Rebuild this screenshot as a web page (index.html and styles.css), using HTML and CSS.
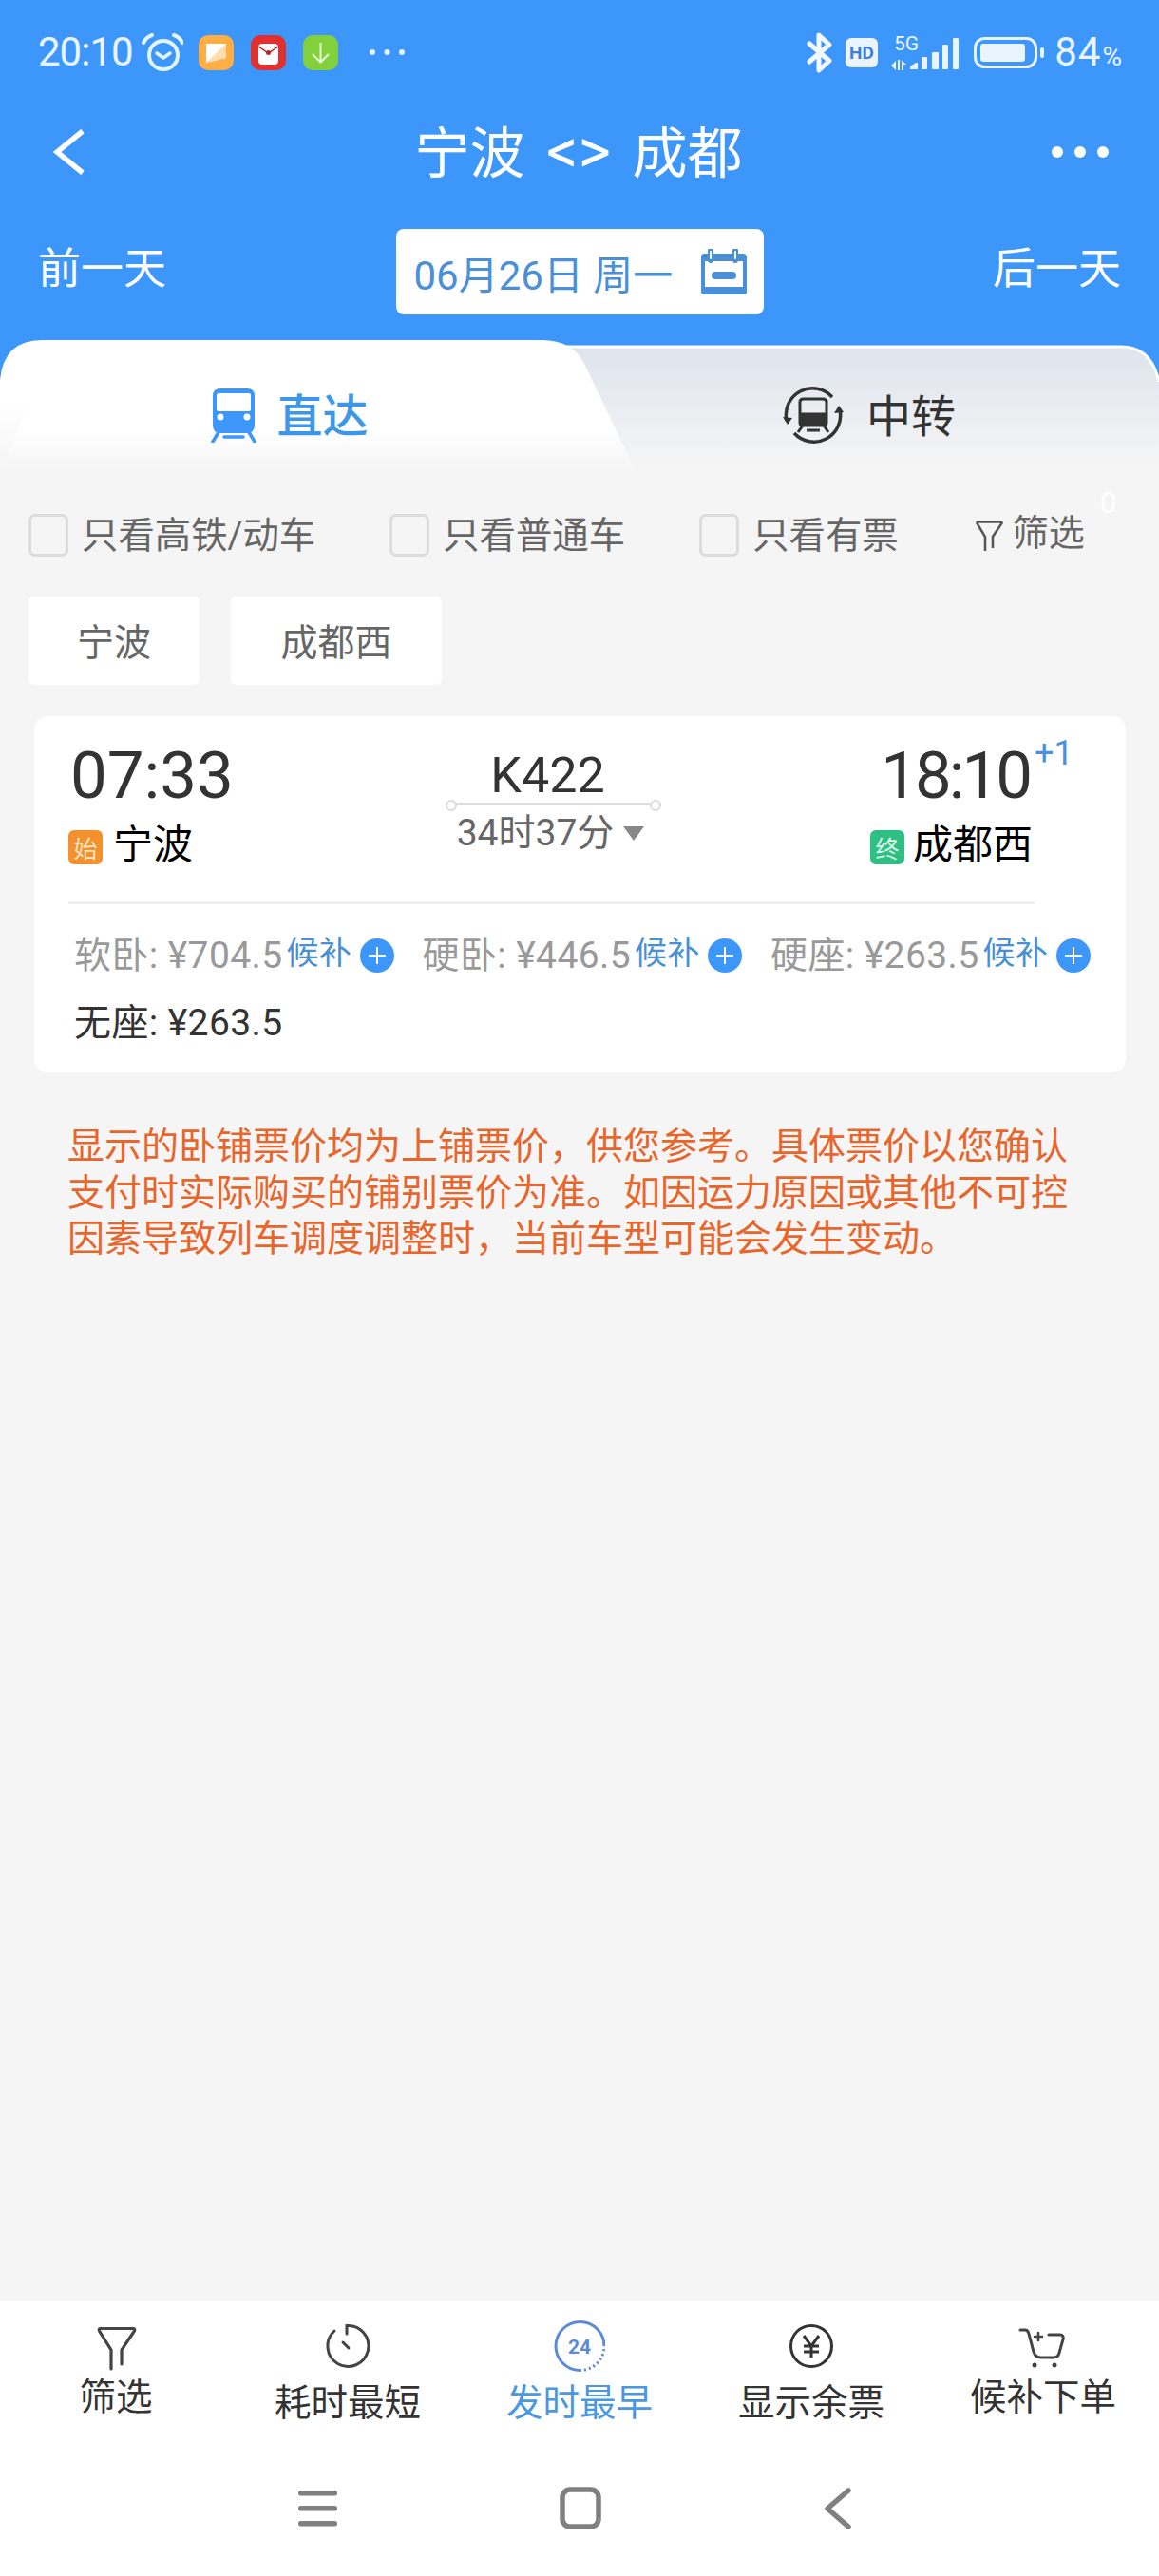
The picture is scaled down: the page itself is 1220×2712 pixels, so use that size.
FILE: index.html
```html
<!DOCTYPE html>
<html lang="zh-CN">
<head>
    <meta charset="UTF-8">
    <title>宁波 &lt;&gt; 成都</title>
    <link rel="stylesheet" href="styles.css">
</head>
<body>
    <div class="header">
        <div class="status">
            <span class="status-time">20:10</span>
            <svg class="icon-alarm" width="44" height="40" viewBox="0 0 44 40" fill="none" stroke="#e2f5ff">
                <circle cx="23" cy="23" r="15" stroke-width="4"/>
                <path d="M16 21l7 5 7-5" stroke-width="3.5" stroke-linecap="round" stroke-linejoin="round"/>
                <path d="M2 10Q5 4 11 2M34 2Q40 4 43 10" stroke-width="4" stroke-linecap="round"/>
            </svg>
            <svg class="icon-app" width="37" height="37" viewBox="0 0 37 37">
                <rect width="37" height="37" rx="10" fill="#ffae46"/>
                <path d="M8 9H29V24L8 29Z" fill="#fff"/>
                <path d="M29 9V24L8 29Z" fill="#ffdcae"/>
            </svg>
            <svg class="icon-app" width="37" height="37" viewBox="0 0 37 37">
                <rect width="37" height="37" rx="10" fill="#e2302f"/>
                <rect x="8" y="9" width="21" height="22" rx="4" fill="#fff"/>
                <path d="M8 12L18.500 19 29 12" fill="none" stroke="#b92230" stroke-width="1.500"/>
                <circle cx="18.500" cy="18.500" r="2.500" fill="#b92230"/>
            </svg>
            <svg class="icon-app" width="37" height="37" viewBox="0 0 37 37">
                <rect width="37" height="37" rx="10" fill="#82d03c"/>
                <path d="M18.500 8V28M10 20l8.500 8.500L27 20" fill="none" stroke="#e4f8cf" stroke-width="2"/>
            </svg>
            <svg class="icon-more" width="37" height="8" viewBox="0 0 37 8" fill="#e2f5ff">
                <circle cx="3" cy="4" r="3"/><circle cx="18.500" cy="4" r="3"/><circle cx="34" cy="4" r="3"/>
            </svg>

            <svg class="icon-bt" width="27" height="43" viewBox="0 0 27 43" fill="none" stroke="#f0f8ff" stroke-width="5" stroke-linejoin="round" stroke-linecap="round">
                <path d="M3 12L24 30 13 40V3L24 13 3 31"/>
            </svg>
            <svg class="icon-hd" width="34" height="31" viewBox="0 0 34 31">
                <rect width="34" height="31" rx="6" fill="#eaf4ff"/>
                <text x="17" y="22" class="hd-text" text-anchor="middle">HD</text>
            </svg>
            <svg class="icon-signal" width="72" height="40" viewBox="0 0 72 40" fill="#eaf4ff">
                <text x="4" y="18" class="fiveg-text">5G</text>
                <path d="M1 34l5-5v10zM8 28h2v11H8zM12 28l5 5h-3v6h-2z"/>
                <path d="M21 38v-3l6-4h2v7z"/>
                <rect x="33" y="25" width="6" height="13" rx="1"/>
                <rect x="44" y="20" width="7" height="18" rx="1"/>
                <rect x="55" y="12" width="6" height="26" rx="1"/>
                <rect x="66" y="5" width="6" height="33" rx="1"/>
            </svg>
            <svg class="icon-battery" width="75" height="33" viewBox="0 0 75 33">
                <rect x="1.500" y="1.500" width="64" height="30" rx="10" fill="none" stroke="#eaf4ff" stroke-width="3"/>
                <rect x="7" y="7" width="47" height="19" rx="3" fill="#eaf4ff"/>
                <rect x="70" y="11" width="4" height="11" rx="2" fill="#eaf4ff"/>
            </svg>
            <span class="status-level">84<small>%</small></span>
        </div>

        <div class="titlebar">
            <svg class="back" width="34" height="48" viewBox="0 0 34 48" fill="none" stroke="#fff" stroke-width="5.500">
                <path d="M31 2L4 24l27 22"/>
            </svg>
            <h1>宁波 <span>&lt;&gt;</span> 成都</h1>
            <svg class="more" width="60" height="12" viewBox="0 0 60 12" fill="#fff">
                <circle cx="6" cy="6" r="6"/><circle cx="30" cy="6" r="6"/><circle cx="54" cy="6" r="6"/>
            </svg>
        </div>

        <div class="daybar">
            <span>前一天</span>
            <div class="date-box">
                <span>06月26日 周一</span>
                <svg width="48" height="48" viewBox="0 0 48 48">
                    <path d="M3 5H44Q48 5 48 9V45Q48 48 45 48H3Q0 48 0 45V9Q0 5 3 5Z" fill="#4a90d9"/>
                    <rect x="4" y="13" width="40" height="27" fill="#fff"/>
                    <path d="M10 2V12M36 2V12" stroke="#4a90d9" stroke-width="6" stroke-linecap="round"/>
                    <path d="M10 3V10M36 3V10" stroke="#fff" stroke-width="2" stroke-linecap="round"/>
                    <rect x="11" y="24" width="26" height="8" rx="4" fill="#4a90d9"/>
                </svg>
            </div>
            <span>后一天</span>
        </div>
    </div>

    <div class="tabs">
        <svg class="tabs-bg" width="1220" height="136" viewBox="0 0 1220 136">
            <defs>
                <linearGradient id="tabOff" x1="0" y1="0" x2="0" y2="1">
                    <stop offset="0" stop-color="#dee4ed"/>
                    <stop offset="1" stop-color="#f5f5f5"/>
                </linearGradient>
                <linearGradient id="tabOn" x1="0" y1="0" x2="0" y2="1">
                    <stop offset="0.700" stop-color="#fff"/>
                    <stop offset="1" stop-color="#f5f5f5"/>
                </linearGradient>
                <linearGradient id="tabEdge" x1="0" y1="0" x2="0" y2="1">
                    <stop offset="0" stop-color="#fff"/>
                    <stop offset="1" stop-color="#f5f5f5"/>
                </linearGradient>
            </defs>
            <path d="M500 7H1180Q1212 7 1220 44V136H500Z" fill="url(#tabOff)"/>
            <path d="M500 7H1180Q1212 7 1220 44" fill="none" stroke="#fff" stroke-width="3"/>
            <path d="M0 42Q4 0 44 0H570Q604 0 616 27L668 136H0Z" fill="url(#tabOn)"/>
            <path d="M0 70L31 65 2 136H0Z" fill="url(#tabEdge)"/>
        </svg>
        <div class="tab tab-on">
            <svg width="48" height="57" viewBox="0 0 48 57">
                <path d="M10 0H38Q46 0 46 8V38Q46 47 38 47H10Q2 47 2 38V8Q2 0 10 0Z" fill="#3d97fb"/>
                <rect x="6" y="5" width="36" height="19" rx="2" fill="#fff"/>
                <circle cx="10" cy="30" r="3.500" fill="#fff"/>
                <circle cx="38" cy="30" r="3.500" fill="#fff"/>
                <path d="M8 46L2 56M40 46L46 56M14 51H34" stroke="#3d97fb" stroke-width="3.500" stroke-linecap="round" fill="none"/>
            </svg>
            <span>直达</span>
        </div>
        <div class="tab">
            <svg width="64" height="60" viewBox="0 0 64 60" fill="none" stroke="#333">
                <path d="M4 36A28 28 0 0 1 52 11M60 24A28 28 0 0 1 12 49" stroke-width="3.500"/>
                <path d="M0 32L5 40 10 33ZM54 28L59 20 64 27Z" fill="#333" stroke="none"/>
                <path d="M18 16Q18 13 22 13H42Q46 13 46 16V38Q46 41 42 41H22Q18 41 18 38Z" stroke-width="3"/>
                <path d="M18 28H46V38Q46 41 42 41H22Q18 41 18 38Z" fill="#333" stroke-width="1"/>
                <path d="M21 41L16 48M43 41L48 48M25 46H39" stroke-width="3"/>
            </svg>
            <span>中转</span>
        </div>
    </div>

    <div class="filters">
        <label class="check"><i></i>只看高铁/动车</label>
        <label class="check"><i></i>只看普通车</label>
        <label class="check"><i></i>只看有票</label>
        <div class="filter-btn">
            <svg width="29" height="32" viewBox="0 0 29 32" fill="none" stroke="#555" stroke-width="2.500">
                <path d="M10 32V17L1.500 3Q1 1.500 2.500 1.500H26.500Q28 1.500 27.500 3L18 17V29"/>
            </svg>
            <span>筛选</span>
            <em>0</em>
        </div>
    </div>

    <div class="stations">
        <div class="chip chip-from">宁波</div>
        <div class="chip chip-to">成都西</div>
    </div>

    <div class="card">
        <div class="card-top">
            <div class="stop">
                <div class="stop-time">07:33</div>
                <div class="stop-name"><b class="badge badge-start">始</b><span>宁波</span></div>
            </div>
            <div class="route">
                <div class="route-no">K422</div>
                <div class="route-line"></div>
                <div class="route-dur">34时37分<i></i></div>
            </div>
            <div class="stop stop-end">
                <div class="stop-time">18:10<sup>+1</sup></div>
                <div class="stop-name"><b class="badge badge-end">终</b><span>成都西</span></div>
            </div>
        </div>
        <div class="divider"></div>
        <div class="prices">
            <div class="price">软卧: ¥704.5<a>候补</a><i class="plus"></i></div>
            <div class="price">硬卧: ¥446.5<a>候补</a><i class="plus"></i></div>
            <div class="price">硬座: ¥263.5<a>候补</a><i class="plus"></i></div>
            <div class="price price-ok">无座: ¥263.5</div>
        </div>
    </div>

    <p class="notice">显示的卧铺票价均为上铺票价，供您参考。具体票价以您确认<br>支付时实际购买的铺别票价为准。如因运力原因或其他不可控<br>因素导致列车调度调整时，当前车型可能会发生变动。</p>

    <div class="bottom">
        <div class="toolbar">
            <div class="tool tool-high">
                <svg width="54" height="54" viewBox="0 0 54 54" fill="none" stroke="#444" stroke-width="3.200" stroke-linecap="round">
                    <path d="M22 51V31L9.500 11Q8.500 8.500 11 8.500H45Q47.500 8.500 46.500 11L33 31V46"/>
                </svg>
                <span>筛选</span>
            </div>
            <div class="tool">
                <svg width="54" height="54" viewBox="0 0 54 54" fill="none" stroke="#444" stroke-width="3" stroke-linecap="round">
                    <path d="M26 14V5.500A21.500 21.500 0 1 1 13 11"/>
                    <path d="M22 23L28 29"/>
                </svg>
                <span>耗时最短</span>
            </div>
            <div class="tool tool-on">
                <svg width="54" height="54" viewBox="0 0 54 54" fill="none" stroke="#5b8ad6" stroke-width="3">
                    <path d="M53 27A25.500 25.500 0 1 0 27 52.500"/>
                    <path d="M27 52.500A25.500 25.500 0 0 0 53 27" stroke-dasharray="2 3"/>
                    <text x="27" y="35" class="day-text" text-anchor="middle">24</text>
                </svg>
                <span>发时最早</span>
            </div>
            <div class="tool">
                <svg width="54" height="54" viewBox="0 0 54 54" fill="none" stroke="#333" stroke-width="3">
                    <circle cx="27" cy="27" r="21.500"/>
                    <path d="M19 16L27 27 35 16M27 27V39M19 27H35M19 33H35"/>
                </svg>
                <span>显示余票</span>
            </div>
            <div class="tool tool-high">
                <svg width="54" height="54" viewBox="0 0 54 54" fill="none" stroke="#444" stroke-width="3" stroke-linecap="round">
                    <path d="M3 10H8Q11 10 12 14L17 33Q19 39 25 39H38Q43 39 44 34L48 20Q49 15 45 15H33"/>
                    <path d="M22 13V21M18 17H26" stroke-width="2.500"/>
                    <circle cx="18" cy="47" r="2.500" fill="#444" stroke="none"/>
                    <circle cx="39" cy="47" r="2.500" fill="#444" stroke="none"/>
                </svg>
                <span>候补下单</span>
            </div>
        </div>
        <div class="navbar">
            <svg width="41" height="45" viewBox="0 0 41 45" fill="#808080">
                <rect y="4" width="41" height="5.500" rx="2.500"/>
                <rect y="20" width="41" height="5.500" rx="2.500"/>
                <rect y="36" width="41" height="5.500" rx="2.500"/>
            </svg>
            <svg width="44" height="45" viewBox="0 0 44 45" fill="none" stroke="#808080" stroke-width="5.500">
                <rect x="3" y="3" width="38" height="39" rx="8"/>
            </svg>
            <svg width="30" height="45" viewBox="0 0 30 45" fill="none" stroke="#808080" stroke-width="5.500" stroke-linecap="round" stroke-linejoin="round">
                <path d="M26 4L4 23l22 19"/>
            </svg>
        </div>
    </div>
</body>
</html>
```

FILE: styles.css
```css
/* Reset */
* {
    margin: 0;
    padding: 0;
    box-sizing: border-box;
}

body {
    width: 1220px;
    height: 2712px;
    display: flex;
    flex-direction: column;
    overflow: hidden;
    background-color: #f5f5f5;
    color: #333;
    font-family: Roboto, "Noto Sans CJK SC", sans-serif;
}

svg {
    display: block;
    flex: none;
}

/* Blue header */
.header {
    height: 358px;
    background-color: #3d97fb;
    color: #fff;
}

.status {
    height: 110px;
    padding: 0 38px 0 40px;
    display: flex;
    align-items: center;
    color: #eaf4ff;
}

.status-time {
    font-size: 42px;
    letter-spacing: -1px;
    line-height: 1;
    width: 109px;
}

.icon-app {
    margin-left: 18px;
}

.icon-alarm + .icon-app {
    margin-left: 16px;
}

.icon-more {
    margin-left: 33px;
}

.icon-bt {
    margin-left: auto;
}

.icon-hd {
    margin-left: 14px;
}

.hd-text {
    font: 700 19px Roboto, sans-serif;
    fill: #3d7fd0;
}

.icon-signal {
    margin-left: 13px;
}

.fiveg-text {
    font: 400 21px Roboto, sans-serif;
}

.icon-battery {
    margin-left: 16px;
}

.status-level {
    margin-left: 10px;
    font-size: 42px;
    letter-spacing: 1px;
    line-height: 1;
}

.status-level small {
    margin-left: 1px;
    font-size: 28px;
}

.titlebar {
    height: 100px;
    padding: 0 53px 0 56px;
    display: grid;
    grid-template-columns: 1fr auto 1fr;
    align-items: center;
}

.titlebar h1 {
    margin-right: 5px;
    font-size: 58px;
    font-weight: 400;
    word-spacing: 8px;
    line-height: 1;
}

.titlebar h1 span {
    font-size: 66px;
}

.more {
    justify-self: end;
}

.daybar {
    margin-top: 31px;
    padding: 0 40px;
    display: flex;
    justify-content: space-between;
    align-items: center;
    font-size: 45px;
}

.daybar > span {
    margin-top: -14px;
    white-space: nowrap;
}

.date-box {
    width: 387px;
    height: 90px;
    padding: 0 18px 0 19px;
    display: flex;
    align-items: center;
    justify-content: space-between;
    background-color: #fff;
    border-radius: 8px;
    color: #4a90d9;
    font-size: 42px;
}

/* Tabs */
.tabs {
    position: relative;
    height: 136px;
    display: flex;
    background-color: #3d97fb;
}

.tabs-bg {
    position: absolute;
    left: 0;
    top: 0;
}

.tab {
    position: relative;
    flex: 1;
    padding-top: 22px;
    display: flex;
    align-items: center;
    justify-content: center;
    gap: 24px;
    font-size: 47px;
}

.tab span {
    margin-top: -6px;
}

.tab-on {
    gap: 21px;
    font-size: 48px;
    font-weight: 500;
    color: #3d97e8;
}

/* Filter row */
.filters {
    margin-top: 47px;
    padding-left: 30px;
    height: 45px;
    display: flex;
    align-items: center;
    gap: 78px;
    font-size: 38.4px;
    color: #666;
}

.check {
    display: flex;
    align-items: center;
    gap: 14px;
    line-height: 45px;
}

.check i {
    width: 42px;
    height: 45px;
    border: 3px solid #dcdcdc;
    border-radius: 7px;
}

.filter-btn {
    position: relative;
    margin-left: 3px;
    display: flex;
    align-items: center;
    gap: 10px;
    font-size: 38px;
    line-height: 40px;
}

.filter-btn span {
    margin-top: -6px;
}

.filter-btn em {
    position: absolute;
    left: 131px;
    top: -38px;
    font-style: normal;
    font-size: 32px;
    color: #fff;
}

/* Station chips */
.stations {
    margin-top: 42px;
    padding-left: 30px;
    display: flex;
    gap: 33px;
}

.chip {
    height: 93px;
    padding-bottom: 4px;
    display: flex;
    align-items: center;
    justify-content: center;
    background-color: #fff;
    border-radius: 6px;
    font-size: 39px;
    color: #666;
}

.chip-from {
    width: 180px;
}

.chip-to {
    width: 222px;
}

/* Train card */
.card {
    margin: 33px 35px 0 36px;
    height: 375px;
    padding-top: 29px;
    background-color: #fff;
    border-radius: 14px;
}

.card-top {
    margin: 0 96px 0 36px;
    display: grid;
    grid-template-columns: 397px 227px 1fr;
}

.stop-time {
    position: relative;
    margin-left: 2px;
    font-size: 69px;
    line-height: 68px;
}

.stop-time sup {
    position: absolute;
    left: 100%;
    top: -8px;
    margin-left: 5px;
    font-size: 36px;
    letter-spacing: 0;
    line-height: 36px;
    color: #4a90e2;
}

.stop-name {
    margin-top: 21px;
    height: 40px;
    display: flex;
    align-items: center;
    gap: 11px;
    font-size: 42px;
    color: #000;
}

.stop-name span {
    margin-top: -13px;
}

.stop-end {
    display: flex;
    flex-direction: column;
    align-items: flex-end;
}

.stop-end .stop-time {
    margin-right: 5px;
    letter-spacing: -3px;
}

.stop-end .stop-name {
    gap: 9px;
    padding-right: 2px;
}

.badge {
    width: 36px;
    height: 36px;
    display: flex;
    align-items: center;
    justify-content: center;
    border-radius: 6px;
    font-size: 25px;
    font-weight: 400;
}

.badge-start {
    background-color: #f5902f;
    color: #ffe3bf;
}

.badge-end {
    background-color: #2fbf83;
    color: #d6f6e8;
}

.route {
    padding-top: 4px;
    text-align: center;
}

.route-no {
    padding-right: 12px;
    font-size: 52px;
    line-height: 60px;
}

.route-line {
    position: relative;
    height: 2px;
    margin-top: -2px;
    background-color: #ddd;
}

.route-line::before,
.route-line::after {
    content: "";
    position: absolute;
    top: -3px;
    width: 8px;
    height: 8px;
    border: 2px solid #ddd;
    border-radius: 50%;
    background-color: #fff;
}

.route-line::before {
    left: 0;
}

.route-line::after {
    right: 0;
}

.route-dur {
    margin-top: 8px;
    padding-right: 6px;
    display: flex;
    align-items: center;
    justify-content: center;
    gap: 10px;
    font-size: 39px;
    line-height: 44px;
    color: #666;
}

.route-dur i {
    width: 0;
    height: 0;
    border-left: 11px solid transparent;
    border-right: 11px solid transparent;
    border-top: 15px solid #888;
}

.divider {
    margin: 37px 96px 0 36px;
    height: 3px;
    background-color: #f0f0f0;
}

.prices {
    margin-top: 25px;
    padding-left: 42px;
    display: grid;
    grid-template-columns: repeat(3, 366.5px);
    row-gap: 21px;
}

.price {
    height: 50px;
    display: flex;
    align-items: center;
    font-size: 39px;
    letter-spacing: 0.4px;
    color: #999;
    white-space: nowrap;
}

.price a {
    margin: 0 0 4px 4px;
    font-size: 34px;
    letter-spacing: 0.5px;
    color: #4a90d0;
}

.plus {
    position: relative;
    width: 36px;
    height: 36px;
    margin: 8px 0 0 8px;
    border-radius: 50%;
    background-color: #3d97fb;
}

.plus::before,
.plus::after {
    content: "";
    position: absolute;
    left: 9px;
    top: 17px;
    width: 18px;
    height: 2px;
    background-color: #fff;
}

.plus::after {
    transform: rotate(90deg);
}

.price-ok {
    color: #333;
}

/* Notice */
.notice {
    margin-top: 54px;
    padding-left: 71px;
    font-size: 39px;
    line-height: 48.5px;
    color: #e8652b;
    white-space: nowrap;
}

/* Bottom bars */
.bottom {
    margin-top: auto;
    height: 290px;
    background-color: #fff;
}

.toolbar {
    height: 178px;
    padding-top: 21px;
    display: grid;
    grid-template-columns: repeat(5, 244px);
}

.tool {
    display: flex;
    flex-direction: column;
    align-items: center;
    font-size: 38.5px;
    line-height: 44px;
    color: #333;
}

.tool span {
    margin-top: 11px;
}

.tool-high span {
    margin-top: 5px;
}

.tool-on {
    color: #4a98e0;
}

.day-text {
    font: 700 21px Roboto, sans-serif;
    fill: #5b8ad6;
    stroke: none;
}

.navbar {
    padding: 18px 0 0 314px;
    display: flex;
    gap: 234px;
}
```
